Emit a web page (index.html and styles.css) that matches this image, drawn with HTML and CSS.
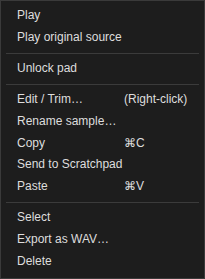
FILE: index.html
```html
<!DOCTYPE html>
<html>

<head>
    <title>Pad menu</title>
    <meta charset="utf-8">
    <meta name="viewport" content="width=device-width, initial-scale=1.0">
    <link rel="stylesheet" href="styles.css">
</head>

<body>
    <ul class="menu">
        <li class="item">Play</li>
        <li class="item">Play original source</li>
        <li class="sep"></li>
        <li class="item">Unlock pad</li>
        <li class="sep"></li>
        <li class="item"><span class="label">Edit / Trim…</span><span class="key">(Right-click)</span></li>
        <li class="item">Rename sample…</li>
        <li class="item"><span class="label">Copy</span><span class="key">⌘C</span></li>
        <li class="item">Send to Scratchpad</li>
        <li class="item"><span class="label">Paste</span><span class="key">⌘V</span></li>
        <li class="sep"></li>
        <li class="item">Select</li>
        <li class="item">Export as WAV…</li>
        <li class="item">Delete</li>
    </ul>
</body>

</html>
```

FILE: styles.css
```css
html,
body {
    margin: 0;
    background: #1c1c1c;
}

.menu {
    box-sizing: border-box;
    width: 205px;
    height: 279px;
    margin: 0;
    padding: 4px 0 0 0;
    list-style: none;
    background: #1d1d1d;
    border: 1px solid #3a3a3a;
    font-family: "Liberation Sans", Arial, sans-serif;
    font-size: 12px;
    color: #dedede;
}

.item {
    display: flex;
    height: 21.8px;
    line-height: 21.8px;
    padding-left: 16px;
    white-space: nowrap;
}

.label {
    width: 107px;
}

.sep {
    height: 1px;
    margin: 4px 5px 4.3px;
    background: #3b3b3b;
}
```
